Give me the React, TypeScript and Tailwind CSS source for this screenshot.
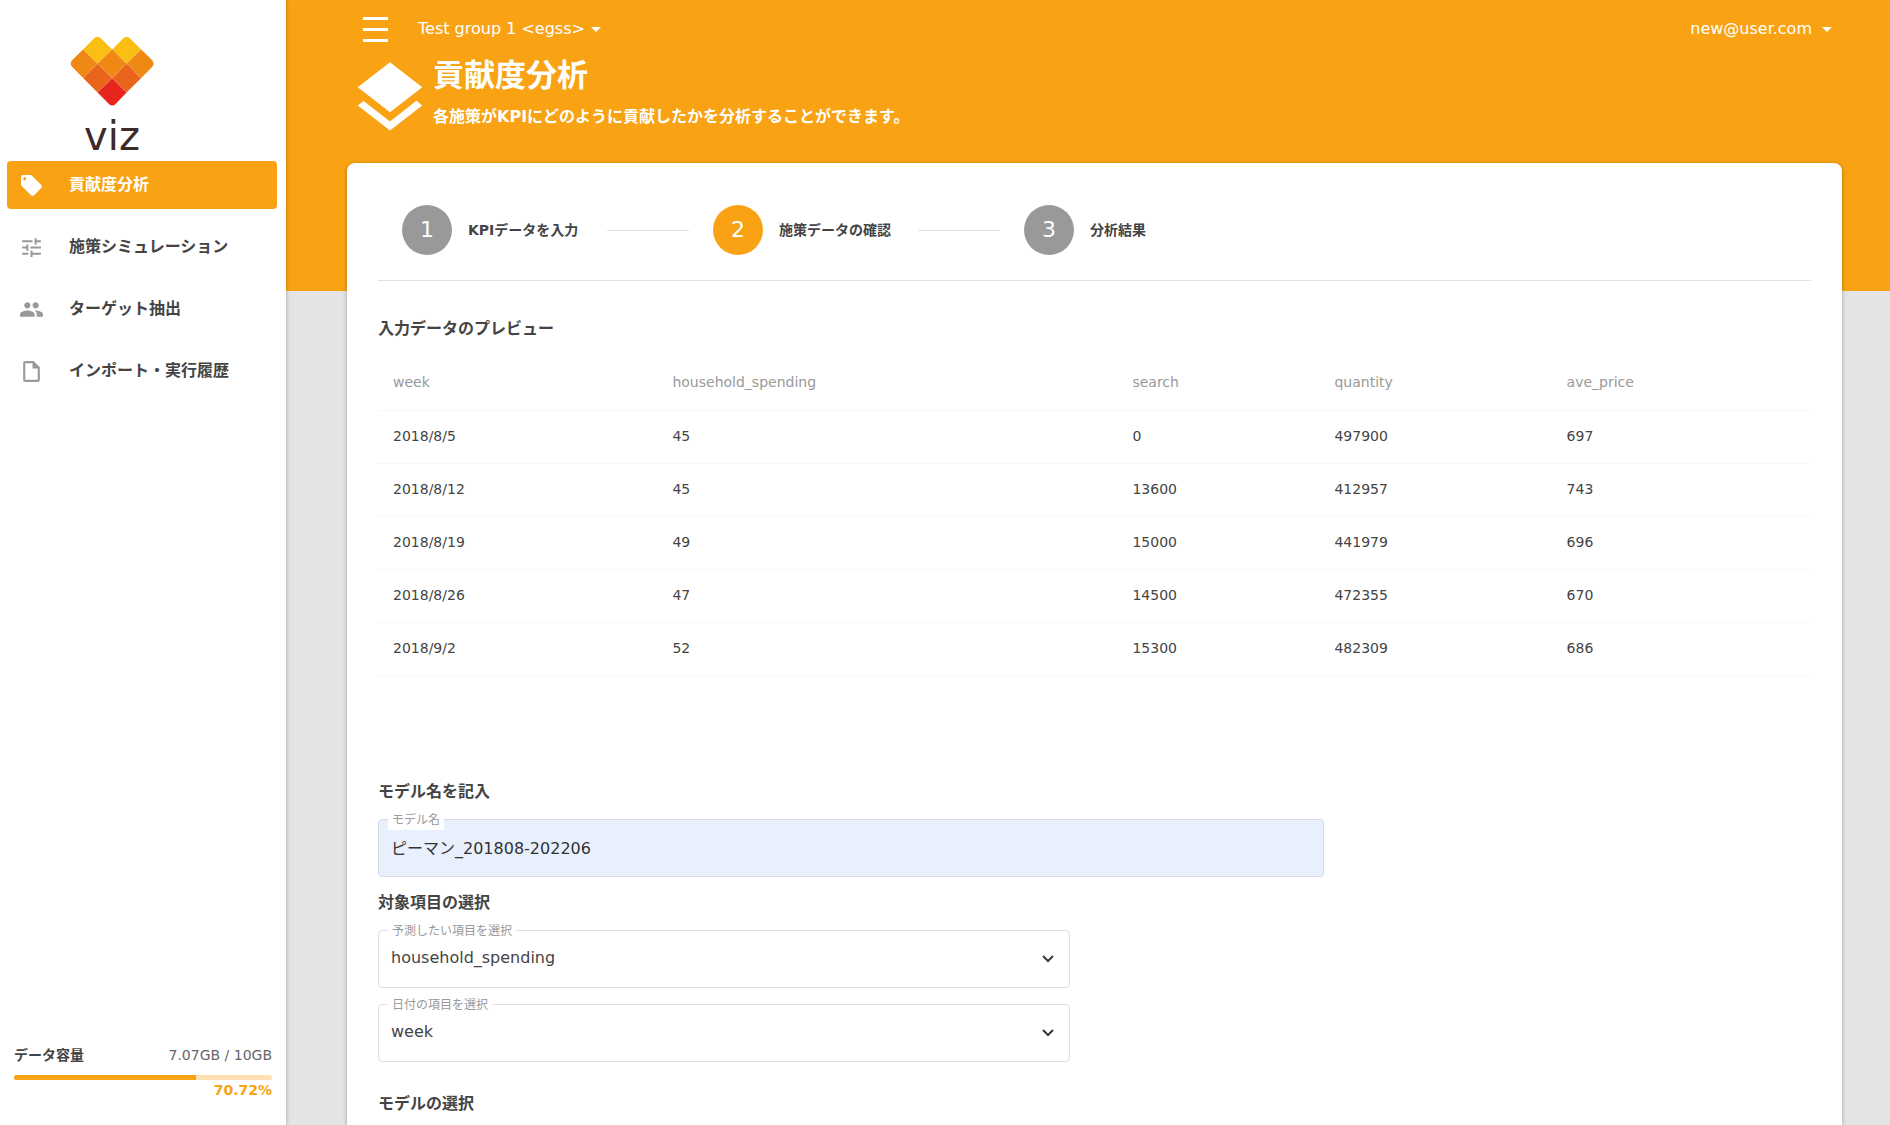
import { useState } from "react";
import {
  MdLayers,
  MdLocalOffer,
  MdOutlineInsertDriveFile,
  MdPeople,
  MdTune,
} from "react-icons/md";

const menuItems = [
  { label: "貢献度分析", icon: MdLocalOffer },
  { label: "施策シミュレーション", icon: MdTune },
  { label: "ターゲット抽出", icon: MdPeople },
  { label: "インポート・実行履歴", icon: MdOutlineInsertDriveFile },
];

const steps = ["KPIデータを入力", "施策データの確認", "分析結果"];

const columns = ["week", "household_spending", "search", "quantity", "ave_price"];

const rows = [
  ["2018/8/5", "45", "0", "497900", "697"],
  ["2018/8/12", "45", "13600", "412957", "743"],
  ["2018/8/19", "49", "15000", "441979", "696"],
  ["2018/8/26", "47", "14500", "472355", "670"],
  ["2018/9/2", "52", "15300", "482309", "686"],
];

const Caret = () => (
  <svg viewBox="0 0 10 5" className="h-[5px] w-[10px]" fill="currentColor">
    <path d="M0 0h10L5 5z" />
  </svg>
);

const Logo = () => (
  <div className="flex w-56 flex-col items-center gap-[10px] pt-9">
    <svg viewBox="210 108 252 211" className="h-[70px] w-[84px]">
      <defs>
        <clipPath id="heart">
          <path d="M280 116Q292 104 304 116L337 148L368 116Q380 104 392 116L456 179Q467 191 456 203L349 312Q337 324 325 312L217 203Q206 191 217 179Z" />
        </clipPath>
      </defs>
      <g clipPath="url(#heart)" stroke="#ffffff" strokeOpacity="0.15" strokeWidth="1.5">
        <path fill="#fbbf14" d="M292 104l45 44-45 43-43-43zM380 104l44 44-44 43-43-43z" />
        <path
          fill="#f08814"
          d="M249 148l43 43-43 44-44-44zM337 148l43 43-43 44-45-44zM424 148l44 43-44 44-44-44z"
        />
        <path fill="#ea651c" d="M292 191l45 44-45 43-43-43zM380 191l44 44-44 43-43-43z" />
        <path fill="#e6261c" d="M337 235l43 43-43 46-45-46z" />
      </g>
    </svg>
    <span className="text-[40px] leading-10 text-[#3f2a2a]">viz</span>
  </div>
);

const Sidebar = () => (
  <aside className="sticky top-0 z-10 flex h-screen w-[286px] shrink-0 flex-col bg-white shadow-[0_0_4px_rgba(0,0,0,0.3)]">
    <Logo />
    <nav className="mt-[5px] flex flex-1 flex-col gap-[14px] pl-[7px] pr-[9px]">
      {menuItems.map(({ label, icon: Icon }, i) => (
        <a
          key={label}
          href="#"
          className={
            i === 0
              ? "flex h-12 items-center gap-[25px] rounded bg-[#f9a314] px-3 font-bold text-white"
              : "flex h-12 items-center gap-[25px] rounded px-3 font-bold text-[#444]"
          }
        >
          <Icon size={25} className={i === 0 ? "text-white" : "text-[#999]"} />
          {label}
        </a>
      ))}
    </nav>
    <div className="px-[14px] pb-[25px] text-sm">
      <div className="flex items-center justify-between">
        <span className="font-bold text-[#444]">データ容量</span>
        <span className="text-[#666]">7.07GB / 10GB</span>
      </div>
      <div className="mt-[10px] h-[5px] rounded-full bg-[#fee0b2]">
        <div className="h-full rounded-l-full bg-[#f9a314]" style={{ width: "70.72%" }} />
      </div>
      <p className="text-right font-bold text-[#f9a314]">70.72%</p>
    </div>
  </aside>
);

const SelectField = ({ id, label, initial }: { id: string; label: string; initial: string }) => {
  const [value, setValue] = useState(initial);
  return (
    <div className="relative w-[692px] max-w-full">
      <label
        htmlFor={id}
        className="absolute -top-[9px] left-[10px] bg-white px-1 text-xs leading-5 text-[#999]"
      >
        {label}
      </label>
      <select
        id={id}
        value={value}
        onChange={(e) => setValue(e.target.value)}
        className="h-[58px] w-full appearance-none rounded border border-[#dce1e8] bg-white px-3 pb-[2px] text-[#444] outline-none"
      >
        {columns.map((c) => (
          <option key={c} value={c}>
            {c}
          </option>
        ))}
      </select>
      <svg
        viewBox="0 0 12 8"
        className="pointer-events-none absolute right-4 top-[25px] h-2 w-3"
        fill="none"
        stroke="#343a40"
        strokeWidth="2"
      >
        <path d="M1 1l5 5 5-5" />
      </svg>
    </div>
  );
};

const App = () => {
  const [modelName, setModelName] = useState("ピーマン_201808-202206");
  return (
    <div className="flex min-h-screen bg-[#e4e4e4] font-['DejaVu_Sans','Noto_Sans_CJK_JP',sans-serif] text-base text-[#444]">
      <Sidebar />
      <div className="flex min-w-0 flex-1 flex-col">
        <header className="h-[291px] shrink-0 bg-[#f9a314] pl-[61px] pr-12 text-white">
          <div className="flex h-[58px] items-center pl-4 pr-[10px]">
            <button aria-label="menu" className="flex w-[25px] flex-col gap-2">
              <span className="h-[3px] bg-white" />
              <span className="h-[3px] bg-white" />
              <span className="h-[3px] bg-white" />
            </button>
            <button className="ml-[30px] flex items-center gap-[6px]">
              Test group 1 &lt;egss&gt;
              <Caret />
            </button>
            <button className="ml-auto flex items-center gap-[10px]">
              new@user.com
              <Caret />
            </button>
          </div>
          <div className="-mt-[3px] flex">
            <MdLayers size={86} className="shrink-0" />
            <div className="pt-[2px] font-bold">
              <h1 className="text-[31px] leading-9">貢献度分析</h1>
              <p className="mt-3 leading-6">
                各施策がKPIにどのように貢献したかを分析することができます。
              </p>
            </div>
          </div>
        </header>
        <main className="ml-[61px] mr-12 -mt-32 flex-1 rounded-t-lg bg-white px-[31px] pt-[42px] shadow-[0_1px_4px_rgba(0,0,0,0.3)]">
          <ol className="flex border-b border-[#e1e1e1] pb-[25px] pl-6">
            {steps.map((step, i) => (
              <li key={step} className="flex w-[311px] items-center">
                <span
                  className={
                    i === 1
                      ? "flex size-[50px] items-center justify-center rounded-full bg-[#f9a314] pb-[2px] text-[22px] text-white"
                      : "flex size-[50px] items-center justify-center rounded-full bg-[#999] pb-[2px] text-[22px] text-white"
                  }
                >
                  {i + 1}
                </span>
                <span className="ml-4 text-sm font-bold">{step}</span>
                {i < steps.length - 1 && <span className="ml-auto mr-6 h-px w-[82px] bg-[#e1e1e1]" />}
              </li>
            ))}
          </ol>

          <h2 className="mt-9 font-bold leading-6">入力データのプレビュー</h2>
          <table className="mt-4 w-full table-fixed text-left text-sm">
            <colgroup>
              <col className="w-[19.5%]" />
              <col className="w-[32.1%]" />
              <col className="w-[14.1%]" />
              <col className="w-[16.2%]" />
              <col />
            </colgroup>
            <thead>
              <tr className="h-[53px] border-b border-[#f7f7f7]">
                {columns.map((c) => (
                  <th key={c} className="px-[15px] pb-[2px] font-normal text-[#999]">
                    {c}
                  </th>
                ))}
              </tr>
            </thead>
            <tbody>
              {rows.map((row) => (
                <tr key={row[0]} className="h-[53px] border-b border-[#f7f7f7]">
                  {row.map((cell, i) => (
                    <td key={i} className="px-[15px] pb-[2px]">
                      {cell}
                    </td>
                  ))}
                </tr>
              ))}
            </tbody>
          </table>

          <h2 className="mt-[104px] font-bold leading-6">モデル名を記入</h2>
          <div className="relative mt-[15px] w-[66%]">
            <label
              htmlFor="modelName"
              className="absolute -top-[9px] left-[10px] bg-white px-1 text-xs leading-5 text-[#999]"
            >
              モデル名
            </label>
            <input
              id="modelName"
              type="text"
              value={modelName}
              onChange={(e) => setModelName(e.target.value)}
              className="block h-[58px] w-full rounded border border-[#d3dce8] bg-[#e8f0fe] px-3 pb-[2px] text-[#333] outline-none"
            />
          </div>

          <h2 className="mt-[14px] font-bold leading-6">対象項目の選択</h2>
          <div className="mt-[15px] flex flex-col gap-4">
            <SelectField id="target" label="予測したい項目を選択" initial="household_spending" />
            <SelectField id="date" label="日付の項目を選択" initial="week" />
          </div>

          <h2 className="mt-[30px] font-bold leading-6">モデルの選択</h2>
        </main>
      </div>
    </div>
  );
};

export default App;
